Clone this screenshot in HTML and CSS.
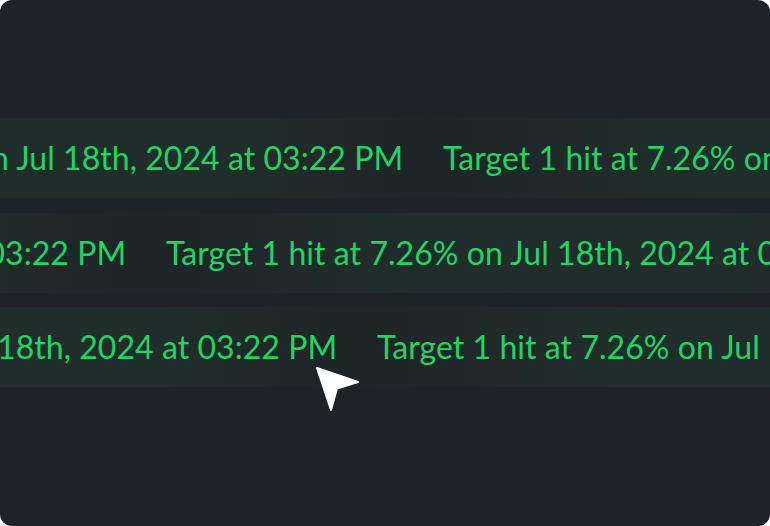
FILE: index.html
```html
<!DOCTYPE html>
<html lang="en">
<head>
<meta charset="utf-8">
<title>Ticker</title>
<link rel="stylesheet" href="styles.css">
</head>
<body>
<div class="card">
  <div class="rows">
    <div class="row">
      <div class="track track-1">
        <div class="item">Target 1 hit at 7.26% on Jul 18th, 2024 at 03:22 PM</div>
        <div class="item">Target 1 hit at 7.26% on Jul 18th, 2024 at 03:22 PM</div>
      </div>
    </div>
    <div class="row">
      <div class="track track-2">
        <div class="item">Target 1 hit at 7.26% on Jul 18th, 2024 at 03:22 PM</div>
        <div class="item">Target 1 hit at 7.26% on Jul 18th, 2024 at 03:22 PM</div>
      </div>
    </div>
    <div class="row">
      <div class="track track-3">
        <div class="item">Target 1 hit at 7.26% on Jul 18th, 2024 at 03:22 PM</div>
        <div class="item">Target 1 hit at 7.26% on Jul 18th, 2024 at 03:22 PM</div>
      </div>
    </div>
  </div>
  <svg class="cursor" width="54" height="54" viewBox="0 0 54 54" aria-hidden="true">
    <path d="M7 6 L48 20 L27 26.5 L21 48 Z" fill="#ffffff" stroke="#ffffff" stroke-width="2" stroke-linejoin="round"/>
  </svg>
</div>
</body>
</html>
```
FILE: styles.css
```css
* { box-sizing: border-box; }
html, body {
  margin: 0;
  padding: 0;
  background: #ffffff;
}
.card {
  position: relative;
  width: 770px;
  height: 526px;
  border-radius: 12px;
  background: #1f2226;
  overflow: hidden;
  padding-top: 118px;
}
.rows {
  display: flex;
  flex-direction: column;
  gap: 14.5px;
}
.row {
  height: 80px;
  overflow: hidden;
}
.track {
  display: flex;
  height: 100%;
}
.track-1 { margin-left: -348px; }
.track-2 { margin-left: -625px; }
.track-3 { margin-left: -414px; }
.item {
  flex: 0 0 771px;
  height: 80px;
  padding-left: 20px;
  white-space: nowrap;
  font-family: Lato, "Liberation Sans", sans-serif;
  font-size: 32px;
  letter-spacing: 0.05px;
  line-height: 80px;
  color: #22d462;
  background: linear-gradient(90deg, rgba(40, 200, 100, 0.015) 0%, rgba(40, 200, 100, 0.075) 35%, rgba(40, 200, 100, 0.075) 75%, rgba(40, 200, 100, 0.015) 100%);
}
.cursor {
  position: absolute;
  left: 310px;
  top: 362px;
}
```
